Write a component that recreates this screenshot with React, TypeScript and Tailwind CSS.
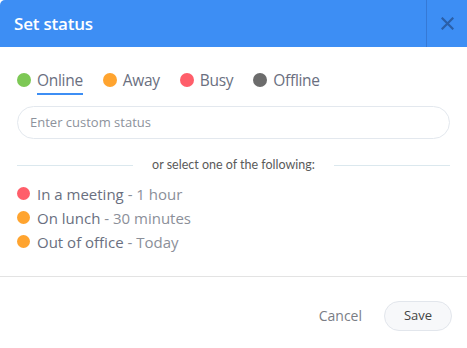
import React from "react";

const statuses = [
  { label: "Online", color: "bg-[#7dc855]", active: true },
  { label: "Away", color: "bg-[#ffa42f]", active: false },
  { label: "Busy", color: "bg-[#ff5e6a]", active: false },
  { label: "Offline", color: "bg-[#6c6c6c]", active: false },
];

const presets = [
  { main: "In a meeting", sub: "1 hour", color: "bg-[#ff5e6a]" },
  { main: "On lunch", sub: "30 minutes", color: "bg-[#ffa42f]" },
  { main: "Out of office", sub: "Today", color: "bg-[#ffa42f]" },
];

export default function App() {
  return (
    <div className="w-[467px] h-[348px] bg-white flex flex-col overflow-hidden" style={{ fontFamily: '"Open Sans", sans-serif' }}>
      <div className="h-[47px] bg-[#3d8ef4] rounded-tl-[5px] flex items-stretch">
        <div className="flex-1 flex items-center pl-[14px] text-white text-[17px] font-semibold tracking-[-0.2px]">
          Set status
        </div>
        <div className="w-[41px] border-l border-[#3579d6] flex items-center justify-center">
          <svg width="13" height="13" viewBox="0 0 13 13">
            <path d="M1.5 1.5 L11.5 11.5 M11.5 1.5 L1.5 11.5" stroke="#2a5fa8" strokeWidth="2.2" strokeLinecap="square" />
          </svg>
        </div>
      </div>

      <div className="flex items-center pl-[17px] pt-[21px] gap-[20px]">
        {statuses.map((s) => (
          <div key={s.label} className="flex items-center gap-[6px]">
            <span className={`w-[14px] h-[14px] rounded-full ${s.color}`} />
            <span className="relative text-[15.5px] leading-[24px] text-[#6a6f80] tracking-[-0.3px]">
              {s.label}
              {s.active && <span className="absolute left-0 right-0 -bottom-[3px] h-[2px] bg-[#3d8ef4]" />}
            </span>
          </div>
        ))}
      </div>

      <div className="mx-[17px] mt-[14px] h-[33px] rounded-full border border-[#e3e8ee] flex items-center pl-[12px] text-[13px] text-[#8d929c]">
        Enter custom status
      </div>

      <div className="mx-[17px] mt-[17px] flex items-center">
        <div className="w-[116px] h-px bg-[#dbe8ee]" />
        <div className="flex-1 text-center text-[12.5px] text-[#5a5a5a]" style={{ fontFamily: "Lato, sans-serif" }}>
          or select one of the following:
        </div>
        <div className="w-[116px] h-px bg-[#dbe8ee]" />
      </div>

      <div className="pl-[17px] mt-[7px] flex flex-col">
        {presets.map((p) => (
          <div key={p.main} className="flex items-center gap-[7px] h-[24px]">
            <span className={`w-[13px] h-[13px] rounded-full ${p.color}`} />
            <span className="text-[15px] text-[#6a6f80]">
              {p.main}
              <span className="text-[#8b8f99]"> - {p.sub}</span>
            </span>
          </div>
        ))}
      </div>

      <div className="mt-[22px] h-px bg-[#e3e3e3]" />

      <div className="flex items-center justify-end pr-[15px] pt-[24px] gap-[22px]">
        <span className="text-[14px] text-[#7a7d85]">Cancel</span>
        <div className="w-[68px] h-[30px] rounded-full border border-[#e2e6ec] bg-[#f7f8fa] flex items-center justify-center text-[13px] text-[#444]">
          Save
        </div>
      </div>
    </div>
  );
}
